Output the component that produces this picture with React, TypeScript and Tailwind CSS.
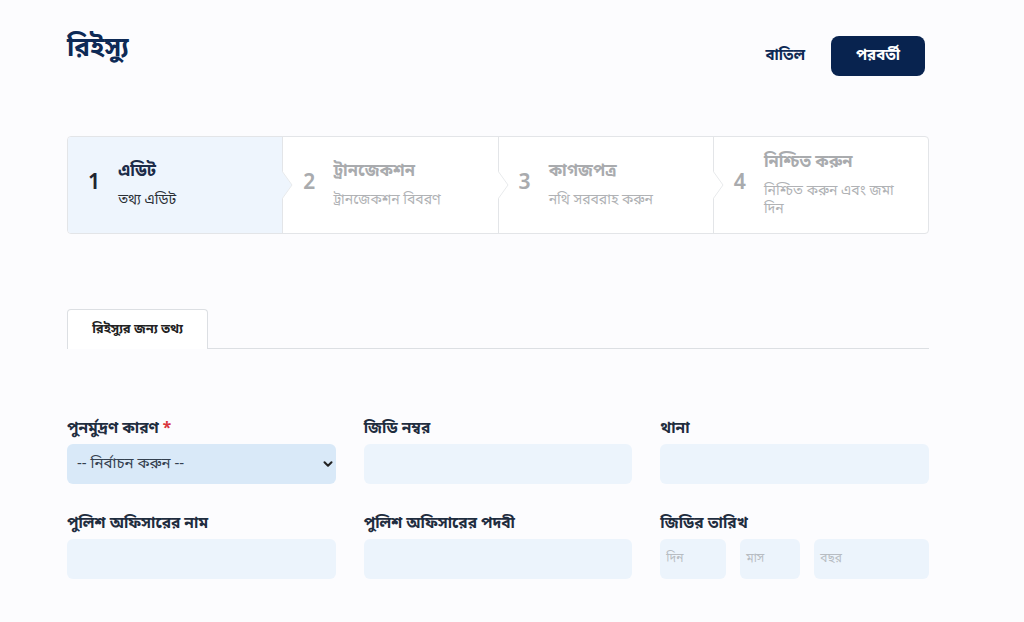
import { ChevronDown } from "lucide-react";

const steps = [
  { n: "1", title: "এডিট", sub: "তথ্য এডিট" },
  { n: "2", title: "ট্রানজেকশন", sub: "ট্রানজেকশন বিবরণ" },
  { n: "3", title: "কাগজপত্র", sub: "নথি সরবরাহ করুন" },
  { n: "4", title: "নিশ্চিত করুন", sub: "নিশ্চিত করুন এবং জমা দিন" },
];

function Field({ label, children, required }: { label: string; children?: React.ReactNode; required?: boolean }) {
  return (
    <div className="flex flex-col">
      <label className="mb-[4px] text-[15.5px] font-bold leading-[22px] text-[#1f2d3f]">
        {label}
        {required && <span className="ml-1 text-[#d9363e]">*</span>}
      </label>
      {children ?? <div className="h-[40px] rounded-md bg-[#ecf4fc]" />}
    </div>
  );
}

export default function App() {
  return (
    <div
      className="min-h-[622px] w-full bg-[#fcfcfe]"
      style={{ fontFamily: '"Noto Sans Bengali", "Noto Sans", "Liberation Sans", sans-serif' }}
    >
      <div className="ml-[67px] w-[862px] pt-[30px]">
        <div className="flex items-start justify-between">
          <h1 className="mt-[2px] text-[26px] font-bold leading-[36px] text-[#0e2a56]">রিইস্যু</h1>
          <div className="mr-[4px] mt-[6px] flex items-center gap-[26px]">
            <button className="text-[15px] font-bold text-[#0e2a56]">বাতিল</button>
            <button className="h-[40px] w-[94px] rounded-lg bg-[#08234f] text-[15px] font-bold text-white">
              পরবর্তী
            </button>
          </div>
        </div>

        <div className="mt-[60px] flex h-[98px] overflow-hidden rounded border border-[#e3e5e8] bg-white">
          {steps.map((s, i) => (
            <div
              key={s.n}
              className={`relative flex flex-1 items-center gap-[18px] pl-[20px] pr-[30px] ${
                i === 0 ? "bg-[#eef5fd]" : ""
              } ${i > 0 ? "border-l border-[#e3e5e8]" : ""}`}
            >
              {i > 0 && (
                <svg className="absolute -left-px top-1/2 -translate-y-1/2" width="12" height="28" viewBox="0 0 12 28">
                  <path d="M0 0 L10 14 L0 28" fill={i === 1 ? "#eef5fd" : "#ffffff"} stroke="#e8eaec" strokeWidth="1" />
                </svg>
              )}
              <span className={`text-[21px] font-semibold ${i === 0 ? "text-[#1f2530]" : "text-[#a9abae]"}`}>
                {s.n}
              </span>
              <div className="flex flex-col">
                <span className={`text-[16.5px] font-bold leading-[24px] ${i === 0 ? "text-[#1b2b48]" : "text-[#a9abae]"}`}>
                  {s.title}
                </span>
                <span className={`mt-[8px] text-[14px] leading-[18px] ${i === 0 ? "text-[#2a2f36]" : "text-[#b0b2b5]"}`}>
                  {s.sub}
                </span>
              </div>
            </div>
          ))}
        </div>

        <div className="mt-[75px] flex border-b border-[#dcdfe3]">
          <div className="-mb-px flex h-[40px] w-[141px] items-center justify-center rounded-t border border-b-0 border-[#dcdfe3] bg-white text-[13px] font-bold text-[#222]">
            রিইস্যুর জন্য তথ্য
          </div>
        </div>

        <div className="mt-[69px] grid grid-cols-3 gap-x-[28px] gap-y-[29px]">
          <Field label="পুনর্মুদ্রণ কারণ" required>
            <div className="flex h-[40px] items-center justify-between rounded-md bg-[#d9e9f8] pl-[10px] pr-[1px] text-[15px] text-[#34404f]">
              <span>-- নির্বাচন করুন --</span>
              <ChevronDown className="h-[14px] w-[14px] text-[#222]" strokeWidth={3.5} />
            </div>
          </Field>
          <Field label="জিডি নম্বর" />
          <Field label="থানা" />
          <Field label="পুলিশ অফিসারের নাম" />
          <Field label="পুলিশ অফিসারের পদবী" />
          <Field label="জিডির তারিখ">
            <div className="flex gap-[14px]">
              <div className="flex h-[40px] w-[66px] items-center rounded-md bg-[#ecf4fc] pl-[6px] text-[12px] text-[#b7bcc2]">দিন</div>
              <div className="flex h-[40px] w-[60px] items-center rounded-md bg-[#ecf4fc] pl-[6px] text-[12px] text-[#b7bcc2]">মাস</div>
              <div className="flex h-[40px] flex-1 items-center rounded-md bg-[#ecf4fc] pl-[6px] text-[12px] text-[#b7bcc2]">বছর</div>
            </div>
          </Field>
        </div>
      </div>
    </div>
  );
}
